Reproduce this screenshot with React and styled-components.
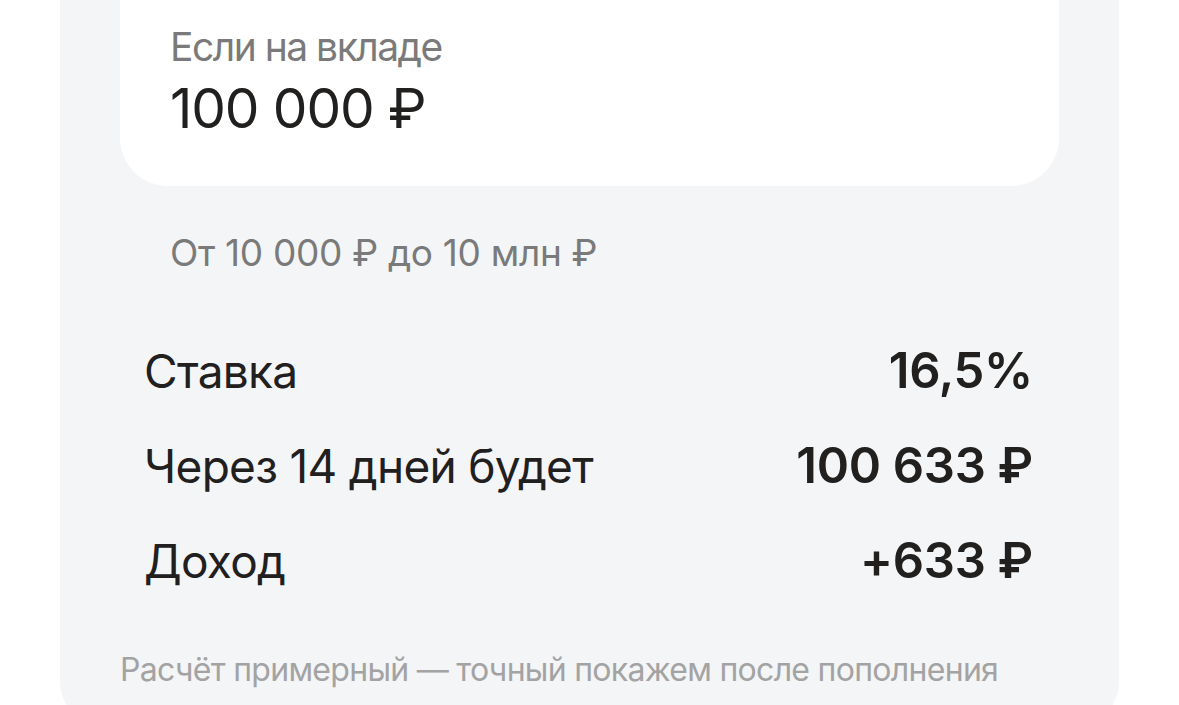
import React from 'react';
import styled, { createGlobalStyle } from 'styled-components';

const Global = createGlobalStyle`
  html, body {
    margin: 0;
    padding: 0;
    background: #ffffff;
    overflow: hidden;
  }
  body {
    font-family: Inter, "Noto Sans", sans-serif;
    color: #21201f;
  }
`;

const Page = styled.div`
  padding: 0 60px;
`;

const Card = styled.div`
  margin-top: -140px;
  padding: 60px 60px 40px;
  background: #f4f5f7;
  border-radius: 48px;
  display: flex;
  flex-direction: column;
`;

const InputBox = styled.div`
  background: #ffffff;
  border-radius: 48px;
  padding: 103px 50px 45px;
  display: flex;
  flex-direction: column;
`;

const FieldLabel = styled.div`
  font-size: 39px;
  line-height: normal;
  color: #7a7a7a;
  letter-spacing: -1.5px;
`;

const FieldValue = styled.div`
  margin-top: 5px;
  font-size: 55px;
  line-height: normal;
  color: #21201f;
  letter-spacing: -1.1px;
`;

const Hint = styled.div`
  margin-top: 44px;
  padding: 0 50px;
  font-size: 37px;
  line-height: normal;
  color: #7a7a7a;
  letter-spacing: -0.3px;
`;

const Rows = styled.div`
  margin-top: 66px;
  padding: 0 26px 0 24px;
  display: flex;
  flex-direction: column;
  gap: 36px;
`;

const Row = styled.div`
  display: flex;
  justify-content: space-between;
  align-items: baseline;
`;

const RowLabel = styled.span`
  font-size: 46px;
  line-height: normal;
  letter-spacing: -0.7px;
`;

const RowValue = styled.span`
  font-size: 49px;
  line-height: normal;
  font-weight: 600;
  letter-spacing: -0.3px;
`;

const Footnote = styled.div`
  margin-top: 60px;
  font-size: 32px;
  line-height: normal;
  color: #a3a3a3;
  letter-spacing: -0.7px;
`;

const rows = [
  { label: 'Ставка', value: '16,5%' },
  { label: 'Через 14 дней будет', value: '100 633 ₽' },
  { label: 'Доход', value: '+633 ₽' },
];

export default function App() {
  return (
    <>
      <Global />
      <Page>
        <Card>
          <InputBox>
            <FieldLabel>Если на вкладе</FieldLabel>
            <FieldValue>100 000 ₽</FieldValue>
          </InputBox>
          <Hint>От 10 000 ₽ до 10 млн ₽</Hint>
          <Rows>
            {rows.map((r) => (
              <Row key={r.label}>
                <RowLabel>{r.label}</RowLabel>
                <RowValue>{r.value}</RowValue>
              </Row>
            ))}
          </Rows>
          <Footnote>Расчёт примерный — точный покажем после пополнения</Footnote>
        </Card>
      </Page>
    </>
  );
}
